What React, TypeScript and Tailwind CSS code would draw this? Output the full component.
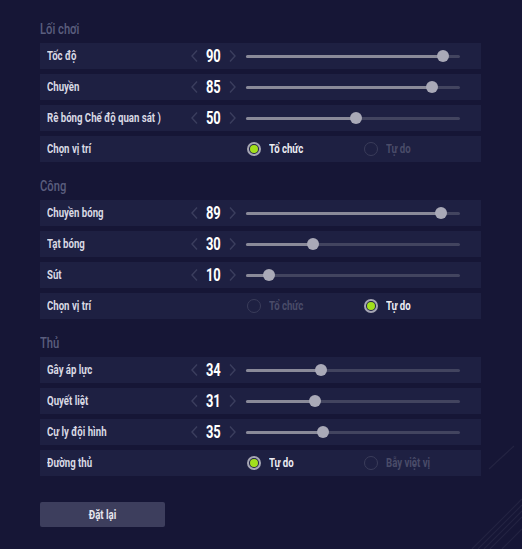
import React from 'react';

type SliderRow = { kind: 'slider'; label: string; value: number };
type RadioRow = { kind: 'radio'; label: string; options: string[]; selected: number };
type Row = SliderRow | RadioRow;

const sections: { title: string; rows: Row[] }[] = [
  {
    title: 'Lối chơi',
    rows: [
      { kind: 'slider', label: 'Tốc độ', value: 90 },
      { kind: 'slider', label: 'Chuyền', value: 85 },
      { kind: 'slider', label: 'Rê bóng Chế độ quan sát )', value: 50 },
      { kind: 'radio', label: 'Chọn vị trí', options: ['Tổ chức', 'Tự do'], selected: 0 },
    ],
  },
  {
    title: 'Công',
    rows: [
      { kind: 'slider', label: 'Chuyền bóng', value: 89 },
      { kind: 'slider', label: 'Tạt bóng', value: 30 },
      { kind: 'slider', label: 'Sút', value: 10 },
      { kind: 'radio', label: 'Chọn vị trí', options: ['Tổ chức', 'Tự do'], selected: 1 },
    ],
  },
  {
    title: 'Thủ',
    rows: [
      { kind: 'slider', label: 'Gây áp lực', value: 34 },
      { kind: 'slider', label: 'Quyết liệt', value: 31 },
      { kind: 'slider', label: 'Cự ly đội hình', value: 35 },
      { kind: 'radio', label: 'Đường thủ', options: ['Tự do', 'Bẫy việt vị'], selected: 0 },
    ],
  },
];

// narrow text: Roboto squeezed horizontally to mimic the game's condensed face
const Narrow = ({ children, className = '' }: { children: React.ReactNode; className?: string }) => (
  <span className={`inline-block whitespace-nowrap ${className}`}>{children}</span>
);

const Chevron = ({ dir }: { dir: 'left' | 'right' }) => (
  <svg width="7" height="14" viewBox="0 0 7 14" className="shrink-0">
    <path
      d={dir === 'left' ? 'M6 1.5 L1 7 L6 12.5' : 'M1 1.5 L6 7 L1 12.5'}
      fill="none"
      stroke="#3b3e5e"
      strokeWidth="1.4"
    />
  </svg>
);

const Slider = ({ value }: { value: number }) => (
  <div className="relative w-[214px] h-[12px] ml-[10px] flex items-center">
    <div className="absolute left-0 right-0 h-[3px] rounded-full bg-[#42445f]" />
    <div
      className="absolute left-0 h-[3px] rounded-full bg-[#8a8a99]"
      style={{ width: value * 2.17 }}
    />
    <div
      className="absolute top-[0px] w-[12px] h-[12px] rounded-full bg-[#a9a9b7]"
      style={{ left: 1.5 + value * 2.17 - 6 }}
    />
  </div>
);

const Radio = ({ on, text, last }: { on: boolean; text: string; last?: boolean }) => (
  <div className={`flex items-center ${last ? '' : 'w-[117px]'}`}>
    {on ? (
      <div className="w-[14px] h-[14px] rounded-full border-2 border-[#a6a6b4] flex items-center justify-center">
        <div className="w-[8px] h-[8px] rounded-full bg-[#a2e01c]" />
      </div>
    ) : (
      <div className="w-[14px] h-[14px] rounded-full border-[1.5px] border-[#3a3c5a]" />
    )}
    <Narrow className={`ml-[8px] origin-left scale-x-[0.74] text-[13px] font-bold ${on ? 'text-[#ececf2]' : 'text-[#4a4c69]'}`}>{text}</Narrow>
  </div>
);

export default function App() {
  return (
    <div className="relative w-[522px] h-[549px] overflow-hidden bg-[#161636] pl-[40px] pt-[20px] font-['Roboto','Liberation_Sans',sans-serif]">
      {/* decorative stripes */}
      <svg className="absolute right-0 bottom-0" width="90" height="130" viewBox="0 0 90 130">
        <g stroke="#ffffff" strokeOpacity="0.06" strokeWidth="1.2">
          <line x1="57" y1="50" x2="82" y2="27" />
          <line x1="40" y1="130" x2="90" y2="80" />
          <line x1="46" y1="130" x2="90" y2="86" />
          <line x1="52" y1="130" x2="90" y2="92" />
          <line x1="58" y1="130" x2="90" y2="98" />
          <line x1="70" y1="130" x2="90" y2="110" />
        </g>
      </svg>

      <div className="relative flex flex-col gap-[15px]">
        {sections.map((s) => (
          <div key={s.title} className="flex flex-col">
            <div className="h-[23px] pb-[4px] flex items-center text-[14px] font-medium text-[#5b5e7e]">
              <Narrow className="origin-left scale-x-[0.8]">{s.title}</Narrow>
            </div>
            <div className="flex flex-col gap-[5px]">
              {s.rows.map((r, i) => (
                <div key={i} className="w-[441px] h-[26px] bg-[#1e2042] flex items-center">
                  {r.kind === 'slider' ? (
                    <>
                      <div className="w-[151px] pl-[7px] text-[13px] font-bold text-[#d9d9e4]">
                        <Narrow className="origin-left scale-x-[0.74]">{r.label}</Narrow>
                      </div>
                      <Chevron dir="left" />
                      <div className="w-[31px] flex justify-center text-[18px] font-bold text-white leading-none">
                        <Narrow className="origin-center scale-x-[0.72]">{r.value}</Narrow>
                      </div>
                      <Chevron dir="right" />
                      <Slider value={r.value} />
                    </>
                  ) : (
                    <>
                      <div className="w-[207px] pl-[7px] text-[13px] font-bold text-[#d9d9e4]">
                        <Narrow className="origin-left scale-x-[0.74]">{r.label}</Narrow>
                      </div>
                      {r.options.map((o, j) => (
                        <Radio key={o} on={j === r.selected} text={o} last={j === r.options.length - 1} />
                      ))}
                    </>
                  )}
                </div>
              ))}
            </div>
          </div>
        ))}
      </div>

      <button className="relative mt-[26px] w-[125px] h-[25px] rounded-[2px] bg-[#3d3e5d] text-[13px] font-bold text-[#e6e6ee] flex items-center justify-center">
        <Narrow className="origin-center scale-x-[0.74]">Đặt lại</Narrow>
      </button>
    </div>
  );
}
